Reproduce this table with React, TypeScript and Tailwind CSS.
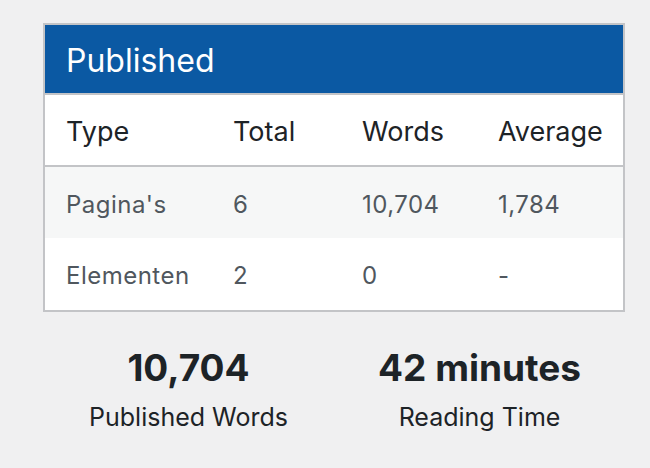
import React from 'react';

type Row = {
	type: string;
	total: string;
	words: string;
	average: string;
};

const rows: Row[] = [
	{ type: "Pagina's", total: '6', words: '10,704', average: '1,784' },
	{ type: 'Elementen', total: '2', words: '0', average: '-' },
];

const cols = 'grid grid-cols-[167px_129px_136px_1fr]';

const App = () => {
	return (
		<div
			className="min-h-screen bg-[#f0f0f1] pt-[23px] pl-[43px]"
			style={{ fontFamily: 'Inter, "Noto Sans", sans-serif' }}
		>
			<div className="w-[582px]">
				<div className="border-2 border-[#c3c4c7] bg-white">
					<div className="h-[70px] bg-[#0b59a3] pl-[21px] pt-[3px] flex items-center text-white text-[32px] border-b-2 border-[#c3c4c7]">
						Published
					</div>
					<div className={`${cols} h-[72px] pt-[4px] items-center text-[27px] text-[#1d2327] border-b-2 border-[#c3c4c7]`}>
						<div className="pl-[21px]">Type</div>
						<div className="pl-[21px]">Total</div>
						<div className="pl-[21px]">Words</div>
						<div className="pl-[21px]">Average</div>
					</div>
					{rows.map((row, i) => (
						<div
							key={row.type}
							className={`${cols} ${i === 0 ? 'h-[71px] bg-[#f6f7f7]' : 'h-[72px] bg-white'} pt-[4px] items-center text-[24px] tracking-[0.02em] text-[#50575e]`}
						>
							<div className="pl-[21px]">{row.type}</div>
							<div className="pl-[21px]">{row.total}</div>
							<div className="pl-[21px]">{row.words}</div>
							<div className="pl-[21px]">{row.average}</div>
						</div>
					))}
				</div>
				<div className="grid grid-cols-2 mt-[34px] text-[#1d2327] text-center">
					<div>
						<div className="text-[37px] font-bold leading-[44px]">10,704</div>
						<div className="text-[25px] leading-[32px] mt-[11px]">Published Words</div>
					</div>
					<div>
						<div className="text-[37px] font-bold leading-[44px]">42 minutes</div>
						<div className="text-[25px] leading-[32px] mt-[11px]">Reading Time</div>
					</div>
				</div>
			</div>
		</div>
	);
};

export default App;
